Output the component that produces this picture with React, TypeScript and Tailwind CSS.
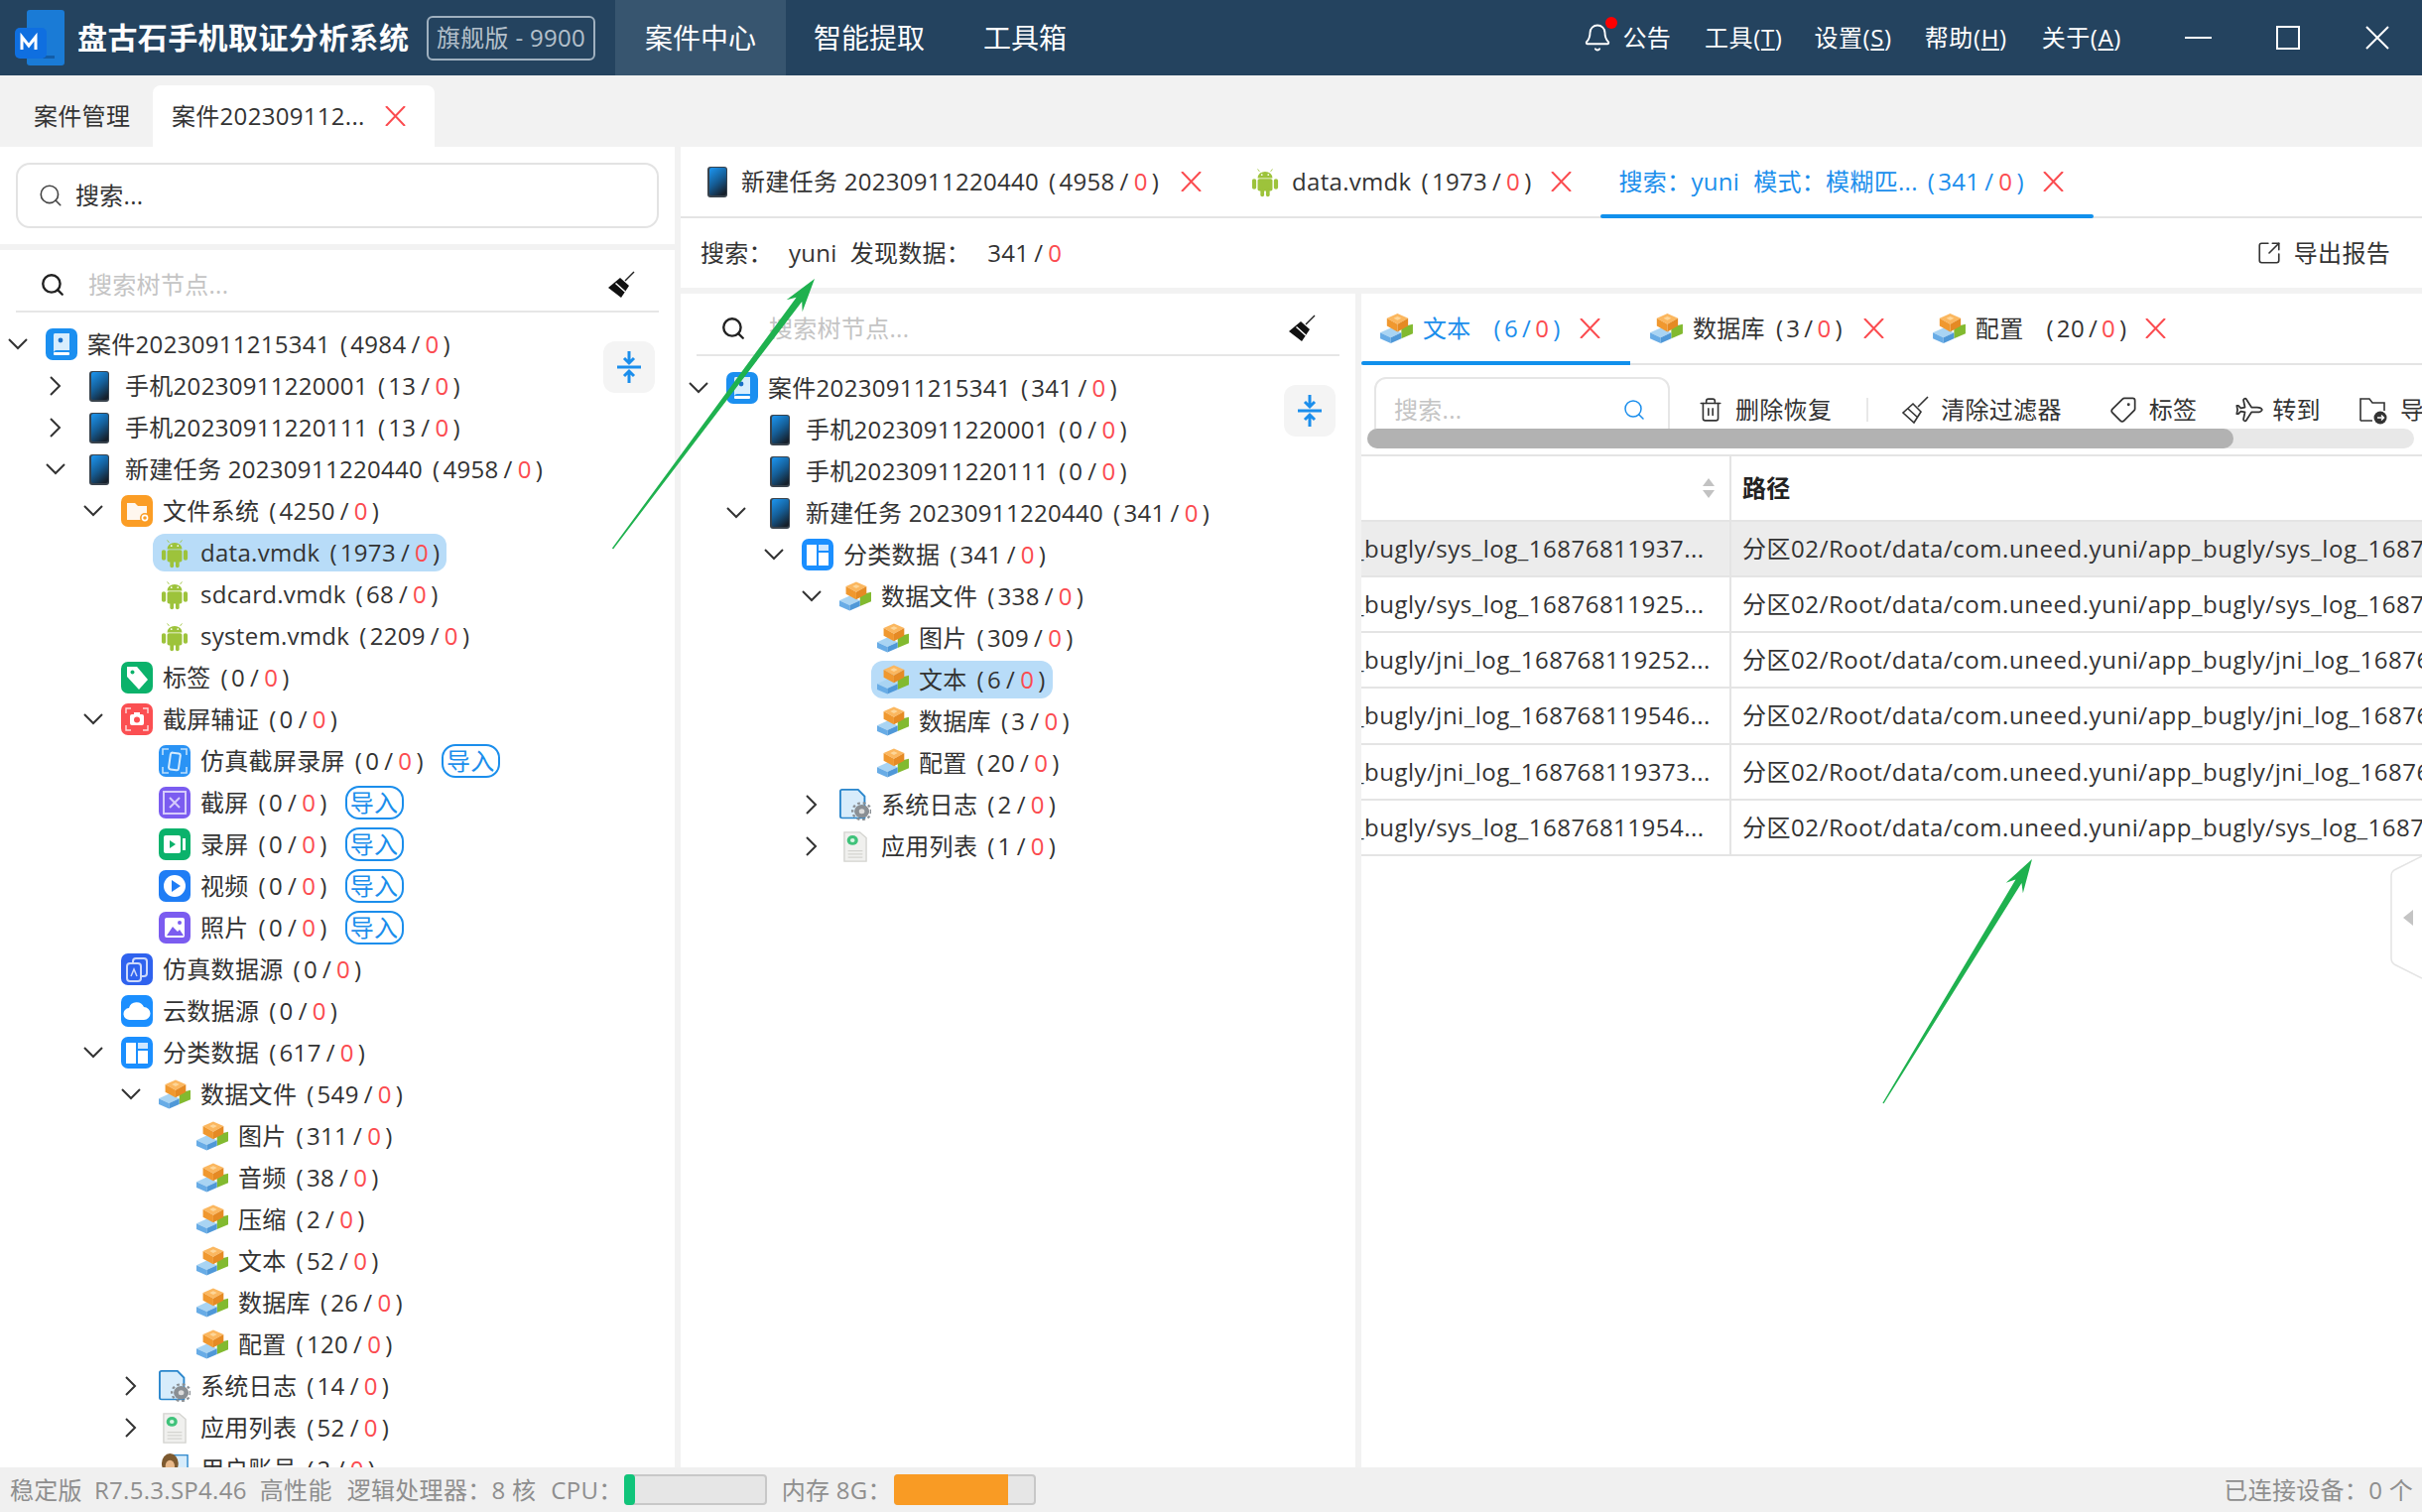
import { ReactNode } from "react";
import { Bell, Search, SquareArrowOutUpRight, Tag, Trash2, Plane } from "lucide-react";

type IconName =
  | "case" | "phone" | "folder" | "android" | "tag" | "camera" | "sim" | "shot" | "rec"
  | "video" | "photo" | "simdata" | "cloud" | "grid" | "blocks" | "log" | "app" | "user";

type Node = {
  level: number;
  icon: IconName;
  label: string;
  count: number;
  arrow?: "down" | "right";
  selected?: boolean;
  imported?: boolean;
};

const Tile = ({ color, children }: { color: string; children: ReactNode }) => (
  <svg width="32" height="32" viewBox="0 0 32 32">
    <rect width="32" height="32" rx="7" fill={color} />
    {children}
  </svg>
);

const Phone = () => (
  <svg width="20" height="31" viewBox="0 0 20 31">
    <defs>
      <linearGradient id="phoneFill" x1="0.2" y1="0" x2="0.7" y2="1">
        <stop offset="0" stopColor="#1b8fe6" />
        <stop offset="0.5" stopColor="#155d96" />
        <stop offset="1" stopColor="#16202c" />
      </linearGradient>
    </defs>
    <rect width="20" height="31" rx="3" fill="#39434d" />
    <rect x="2" y="1" width="17" height="28" rx="2" fill="url(#phoneFill)" />
  </svg>
);

const Android = () => (
  <svg width="28" height="31" viewBox="0 0 30 38" preserveAspectRatio="none" fill="#9dc33b">
    <path d="M7 14a8 8 0 0 1 16 0z" />
    <path d="M9 6 7 3M21 6l2-3" stroke="#9dc33b" strokeWidth="1" />
    <rect x="7" y="15" width="16" height="15" rx="2" />
    <rect x="1" y="15" width="4.5" height="13" rx="2.2" />
    <rect x="24.5" y="15" width="4.5" height="13" rx="2.2" />
    <rect x="10" y="27" width="4" height="10" rx="2" />
    <rect x="16" y="27" width="4" height="10" rx="2" />
    <circle cx="11.5" cy="10" r="1" fill="#fff" />
    <circle cx="18.5" cy="10" r="1" fill="#fff" />
  </svg>
);

const Blocks = () => (
  <svg width="33" height="30" viewBox="0 0 34 31">
    <path d="M22 14l12-3v10l-12 5z" fill="#82ba30" />
    <path d="M0 20l11-5 11 5-11 5z" fill="#a9d4f3" />
    <path d="M0 20l11 5v6L0 26z" fill="#68ace6" />
    <path d="M11 25l11-5v6l-11 5z" fill="#4f98d8" />
    <path d="M7 5 18 0l11 5-11 6z" fill="#fbb75f" />
    <path d="M7 5l11 6v8L7 13z" fill="#f0982f" />
    <path d="M18 11l11-6v8l-11 6z" fill="#e58a24" />
    <path d="M14 5l4-2 4 2-4 2z" fill="#fdd699" />
  </svg>
);

const TreeIcon = ({ name }: { name: IconName }) => {
  switch (name) {
    case "phone":
      return <Phone />;
    case "android":
      return <Android />;
    case "blocks":
      return <Blocks />;
    case "case":
      return (
        <Tile color="#1b8ff0">
          <path d="M9 5h15v17H11a3 3 0 0 0-3 3V7a2 2 0 0 1 1-2z" fill="#d8edfd" />
          <rect x="8" y="24" width="16" height="3" rx="1" fill="#fff" />
          <circle cx="15" cy="12" r="2.4" fill="#1b6fc8" />
        </Tile>
      );
    case "folder":
      return (
        <Tile color="#fb9d25">
          <path d="M6 8h8l3 3h9v14H6z" fill="#fff" opacity="0.92" />
          <circle cx="24" cy="23" r="5" fill="#fb9d25" />
          <circle cx="24" cy="23" r="2.6" fill="none" stroke="#fff" strokeWidth="1.6" />
        </Tile>
      );
    case "tag":
      return (
        <Tile color="#0bb26b">
          <path d="M6 5h10l11 13-9 10L6 15z" fill="#fff" />
          <circle cx="11.5" cy="10.5" r="2" fill="#0bb26b" />
        </Tile>
      );
    case "camera":
      return (
        <Tile color="#fb4f52">
          <path d="M5 10V5h5M22 5h5v5M27 22v5h-5M10 27H5v-5" fill="none" stroke="#fff" strokeWidth="1.4" opacity="0.8" />
          <rect x="9" y="11" width="14" height="11" rx="2" fill="#fff" />
          <rect x="13" y="9" width="6" height="3" fill="#fff" />
          <circle cx="16" cy="16.5" r="3" fill="#fb4f52" />
        </Tile>
      );
    case "sim":
      return (
        <Tile color="#2a93f5">
          <path d="M4 10V4h6M22 4h6v6M28 22v6h-6M10 28H4v-6" fill="none" stroke="#bfe0fc" strokeWidth="1.6" />
          <rect x="11" y="8" width="10" height="17" rx="2" fill="none" stroke="#d5ebfd" strokeWidth="2" transform="rotate(8 16 16)" />
        </Tile>
      );
    case "shot":
      return (
        <Tile color="#7b5cf0">
          <rect x="5" y="5" width="22" height="22" fill="none" stroke="#d6ccfb" strokeWidth="2" />
          <path d="M11 11l10 10M21 11 11 21" stroke="#d6ccfb" strokeWidth="2" />
        </Tile>
      );
    case "rec":
      return (
        <Tile color="#0bb26b">
          <rect x="5" y="7" width="17" height="18" rx="2" fill="#fff" />
          <rect x="24" y="10" width="3" height="12" fill="#fff" />
          <path d="M11 12l6 4-6 4z" fill="#0bb26b" />
        </Tile>
      );
    case "video":
      return (
        <Tile color="#1f7df5">
          <circle cx="16" cy="16" r="11" fill="#fff" />
          <path d="M13 10l9 6-9 6z" fill="#1f7df5" />
        </Tile>
      );
    case "photo":
      return (
        <Tile color="#7b5cf0">
          <rect x="6" y="6" width="20" height="20" rx="2" fill="#fff" />
          <path d="M8 24l6-9 5 5 2-2 4 6z" fill="#7b5cf0" />
          <circle cx="21" cy="11" r="2" fill="#7b5cf0" />
        </Tile>
      );
    case "simdata":
      return (
        <Tile color="#2f62ee">
          <rect x="12" y="5" width="14" height="18" rx="3" fill="none" stroke="#cdd9fb" strokeWidth="2" />
          <rect x="6" y="10" width="14" height="18" rx="3" fill="#2f62ee" stroke="#cdd9fb" strokeWidth="2" />
          <path d="M10 23l3-7 3 7" fill="none" stroke="#cdd9fb" strokeWidth="1.5" />
        </Tile>
      );
    case "cloud":
      return (
        <Tile color="#1b8fff">
          <path d="M9 25a6 6 0 0 1-1-12 8 8 0 0 1 15-1 6.5 6.5 0 0 1 0 13z" fill="#fff" />
        </Tile>
      );
    case "grid":
      return (
        <Tile color="#1b8fff">
          <rect x="5" y="6" width="10" height="21" fill="#fff" />
          <rect x="17" y="6" width="10" height="6" fill="#cfe7ff" />
          <rect x="17" y="14" width="10" height="13" fill="#fff" />
        </Tile>
      );
    case "log":
      return (
        <svg width="32" height="32" viewBox="0 0 34 38" preserveAspectRatio="none">
          <path d="M1 3a2 2 0 0 1 2-2h17l7 8v26H3a2 2 0 0 1-2-2z" fill="#d7ecfb" stroke="#2a86cc" strokeWidth="2" />
          <circle cx="24" cy="27" r="8" fill="#8a8f94" />
          <circle cx="24" cy="27" r="10" fill="none" stroke="#8a8f94" strokeWidth="2.5" strokeDasharray="3 3" />
          <circle cx="24" cy="27" r="3" fill="#dcdcdc" />
        </svg>
      );
    case "app":
      return (
        <svg width="24" height="31" viewBox="0 0 26 38" preserveAspectRatio="none">
          <path d="M1 1h17l7 7v29H1z" fill="#f0f0ee" stroke="#d4d4d0" strokeWidth="1.5" />
          <circle cx="10" cy="11" r="6" fill="#3fc27a" />
          <circle cx="10" cy="11" r="2.5" fill="#d7f5e3" />
          <path d="M5 24h16M5 28h16M5 32h16" stroke="#d4d4d0" strokeWidth="1.5" />
        </svg>
      );
    case "user":
      return (
        <svg width="28" height="32" viewBox="0 0 30 38" preserveAspectRatio="none">
          <rect x="14" y="2" width="15" height="30" fill="#d7ecfb" stroke="#2a86cc" strokeWidth="1.5" />
          <ellipse cx="10" cy="12" rx="9" ry="12" fill="#7d5a30" />
          <ellipse cx="10" cy="15" rx="5" ry="7" fill="#e9b98a" />
        </svg>
      );
  }
};

const Chevron = ({ dir }: { dir?: "down" | "right" }) => (
  <span className="flex h-[24px] w-[24px] shrink-0 items-center justify-center">
    {dir === "down" && (
      <svg width="20" height="12" viewBox="0 0 20 12" fill="none" stroke="#333" strokeWidth="2">
        <path d="M1 1l9 9 9-9" />
      </svg>
    )}
    {dir === "right" && (
      <svg width="12" height="20" viewBox="0 0 12 20" fill="none" stroke="#333" strokeWidth="2">
        <path d="M1 1l9 9-9 9" />
      </svg>
    )}
  </span>
);

const CloseX = () => (
  <svg width="21" height="20" viewBox="0 0 21 20" fill="none" stroke="#fb4b4f" strokeWidth="2" className="shrink-0">
    <path d="M1 0l19 20M20 0 1 20" />
  </svg>
);

const Count = ({ n }: { n: number }) => (
  <span className="ml-[10px] whitespace-nowrap">
    <span className="mr-[3px]">(</span>
    {n}
    <span className="mx-[5px]">/</span>
    <span className="text-[#fb4b4f]">0</span>
    <span className="ml-[4px]">)</span>
  </span>
);

const TabCount = ({ n }: { n: number }) => (
  <span className="whitespace-nowrap">
    <span className="mr-[3px]">(</span>
    {n}
    <span className="mx-[4px]">/</span>
    <span className="text-[#fb4b4f]">0</span>
    <span className="ml-[4px]">)</span>
  </span>
);

const Broom = () => (
  <svg width="28" height="28" viewBox="0 0 28 28" className="shrink-0">
    <path d="M27 1 18 10" stroke="#222" strokeWidth="1.5" />
    <path d="M13 7l9 8-8 12L1 17z" fill="#111" />
    <path d="M8.5 12.5 18 21" stroke="#fff" strokeWidth="1.5" />
  </svg>
);

const Collapse = () => (
  <svg width="26" height="34" viewBox="0 0 26 34" fill="none" stroke="#1b8eec" strokeWidth="3">
    <path d="M13 1v11M8 8l5 5 5-5" />
    <path d="M1 17h24" />
    <path d="M13 33V22M8 26l5-5 5 5" />
  </svg>
);

const TreeSearch = () => (
  <div className="mx-[16px] flex h-[63px] items-center border-b-2 border-[#e6e6e6] pl-[24px] pr-[24px] pt-[8px]">
    <Search size={26} strokeWidth={2.2} className="shrink-0 text-[#222]" />
    <span className="ml-[23px] flex-1 text-[#c4c4c4]">搜索树节点...</span>
    <Broom />
  </div>
);

const Tree = ({ nodes }: { nodes: Node[] }) => {
  const indent = ["pl-[6px]", "pl-[44px]", "pl-[82px]", "pl-[120px]", "pl-[158px]"];
  return (
    <div className="pt-[11px]">
      {nodes.map((node) => (
        <div key={node.label + node.count + node.level} className={`flex h-[42px] items-center ${indent[node.level]}`}>
          <Chevron dir={node.arrow} />
          <div
            className={
              node.selected
                ? "ml-[10px] flex h-[38px] items-center rounded-[12px] bg-[#b8dcf8] pl-[6px] pr-[7px]"
                : "ml-[16px] flex h-[38px] items-center"
            }
          >
            <span className="flex w-[32px] shrink-0 items-center justify-center">
              <TreeIcon name={node.icon} />
            </span>
            <span className="ml-[10px] flex items-center whitespace-nowrap">
              {node.label}
              <Count n={node.count} />
            </span>
          </div>
          {node.imported && (
            <span className="ml-[18px] flex h-[34px] w-[59px] items-center justify-center rounded-[14px] border-2 border-[#1b8eec] text-[#1b8eec]">
              导入
            </span>
          )}
        </div>
      ))}
    </div>
  );
};

const Arrow = ({ x1, y1, x2, y2 }: { x1: number; y1: number; x2: number; y2: number }) => {
  const len = Math.hypot(x2 - x1, y2 - y1);
  const ux = (x2 - x1) / len;
  const uy = (y2 - y1) / len;
  const nx = -uy;
  const ny = ux;
  const at = (back: number, side: number) => `${x2 - ux * back + nx * side},${y2 - uy * back + ny * side}`;
  return (
    <polygon
      fill="#1fb14f"
      points={[at(len, -0.7), at(26, -3.5), at(34, -10), at(0, 0), at(34, 10), at(26, 3.5), at(len, 0.7)].join(" ")}
    />
  );
};

const leftNodes: Node[] = [
  { level: 0, icon: "case", label: "案件20230911215341", count: 4984, arrow: "down" },
  { level: 1, icon: "phone", label: "手机20230911220001", count: 13, arrow: "right" },
  { level: 1, icon: "phone", label: "手机20230911220111", count: 13, arrow: "right" },
  { level: 1, icon: "phone", label: "新建任务 20230911220440", count: 4958, arrow: "down" },
  { level: 2, icon: "folder", label: "文件系统", count: 4250, arrow: "down" },
  { level: 3, icon: "android", label: "data.vmdk", count: 1973, selected: true },
  { level: 3, icon: "android", label: "sdcard.vmdk", count: 68 },
  { level: 3, icon: "android", label: "system.vmdk", count: 2209 },
  { level: 2, icon: "tag", label: "标签", count: 0 },
  { level: 2, icon: "camera", label: "截屏辅证", count: 0, arrow: "down" },
  { level: 3, icon: "sim", label: "仿真截屏录屏", count: 0, imported: true },
  { level: 3, icon: "shot", label: "截屏", count: 0, imported: true },
  { level: 3, icon: "rec", label: "录屏", count: 0, imported: true },
  { level: 3, icon: "video", label: "视频", count: 0, imported: true },
  { level: 3, icon: "photo", label: "照片", count: 0, imported: true },
  { level: 2, icon: "simdata", label: "仿真数据源", count: 0 },
  { level: 2, icon: "cloud", label: "云数据源", count: 0 },
  { level: 2, icon: "grid", label: "分类数据", count: 617, arrow: "down" },
  { level: 3, icon: "blocks", label: "数据文件", count: 549, arrow: "down" },
  { level: 4, icon: "blocks", label: "图片", count: 311 },
  { level: 4, icon: "blocks", label: "音频", count: 38 },
  { level: 4, icon: "blocks", label: "压缩", count: 2 },
  { level: 4, icon: "blocks", label: "文本", count: 52 },
  { level: 4, icon: "blocks", label: "数据库", count: 26 },
  { level: 4, icon: "blocks", label: "配置", count: 120 },
  { level: 3, icon: "log", label: "系统日志", count: 14, arrow: "right" },
  { level: 3, icon: "app", label: "应用列表", count: 52, arrow: "right" },
  { level: 3, icon: "user", label: "用户账号", count: 2 },
];

const midNodes: Node[] = [
  { level: 0, icon: "case", label: "案件20230911215341", count: 341, arrow: "down" },
  { level: 1, icon: "phone", label: "手机20230911220001", count: 0 },
  { level: 1, icon: "phone", label: "手机20230911220111", count: 0 },
  { level: 1, icon: "phone", label: "新建任务 20230911220440", count: 341, arrow: "down" },
  { level: 2, icon: "grid", label: "分类数据", count: 341, arrow: "down" },
  { level: 3, icon: "blocks", label: "数据文件", count: 338, arrow: "down" },
  { level: 4, icon: "blocks", label: "图片", count: 309 },
  { level: 4, icon: "blocks", label: "文本", count: 6, selected: true },
  { level: 4, icon: "blocks", label: "数据库", count: 3 },
  { level: 4, icon: "blocks", label: "配置", count: 20 },
  { level: 3, icon: "log", label: "系统日志", count: 2, arrow: "right" },
  { level: 3, icon: "app", label: "应用列表", count: 1, arrow: "right" },
];

const rows = [
  ["_bugly/sys_log_16876811937...", "分区02/Root/data/com.uneed.yuni/app_bugly/sys_log_16876811937"],
  ["_bugly/sys_log_16876811925...", "分区02/Root/data/com.uneed.yuni/app_bugly/sys_log_16876811925"],
  ["_bugly/jni_log_168768119252...", "分区02/Root/data/com.uneed.yuni/app_bugly/jni_log_168768119252"],
  ["_bugly/jni_log_168768119546...", "分区02/Root/data/com.uneed.yuni/app_bugly/jni_log_168768119546"],
  ["_bugly/jni_log_168768119373...", "分区02/Root/data/com.uneed.yuni/app_bugly/jni_log_168768119373"],
  ["_bugly/sys_log_16876811954...", "分区02/Root/data/com.uneed.yuni/app_bugly/sys_log_16876811954"],
];

export default function App() {
  return (
    <div className="relative flex h-[1524px] w-[2441px] flex-col overflow-hidden bg-[#f2f2f2] font-['Open_Sans','Noto_Sans_CJK_SC',sans-serif] text-[24px] leading-none tracking-[0.3px] text-[#333]">
      {/* title bar */}
      <header className="flex h-[76px] shrink-0 items-center bg-[#24435f] text-white">
        <svg width="50" height="56" viewBox="0 0 50 56" className="ml-[15px] shrink-0">
          <rect x="12" y="0" width="38" height="56" rx="3" fill="#1a7bd6" />
          <rect x="28" y="46" width="12" height="3" fill="#125da8" />
          <rect x="0" y="18" width="32" height="31" rx="5" fill="#0f6fe0" />
          <path d="M7 40V27l7 9 7-9v13" fill="none" stroke="#fff" strokeWidth="3" />
        </svg>
        <div className="ml-[13px] w-[334px] whitespace-nowrap text-[30px] font-bold tracking-[0.4px]">盘古石手机取证分析系统</div>
        <div className="ml-[18px] flex h-[45px] w-[170px] items-center justify-center rounded-[6px] border-2 border-[#9fb0bf] text-[#b4c0cb]">
          旗舰版 - 9900
        </div>
        <div className="ml-[20px] flex h-full w-[172px] items-center justify-center bg-[#37556f] text-[28px] tracking-normal">案件中心</div>
        <div className="ml-[28px] text-[28px] tracking-normal">智能提取</div>
        <div className="ml-[59px] text-[28px] tracking-normal">工具箱</div>
        <div className="ml-auto flex items-center pr-[33px]">
          <div className="relative">
            <Bell size={30} strokeWidth={1.5} />
            <span className="absolute right-[-5px] top-[-6px] h-[12px] w-[12px] rounded-full bg-[#f00]" />
          </div>
          <span className="ml-[10px]">公告</span>
          <span className="ml-[34px] tracking-[0.6px]">工具(<u>T</u>)</span>
          <span className="ml-[32px] tracking-[0.6px]">设置(<u>S</u>)</span>
          <span className="ml-[33px] tracking-[0.6px]">帮助(<u>H</u>)</span>
          <span className="ml-[35px] tracking-[0.6px]">关于(<u>A</u>)</span>
          <span className="ml-[64px] h-[2px] w-[27px] bg-white" />
          <span className="ml-[65px] h-[24px] w-[24px] border-2 border-white" />
          <svg width="24" height="24" viewBox="0 0 24 24" fill="none" stroke="#fff" strokeWidth="2" className="ml-[66px]">
            <path d="M1 1l22 22M23 1 1 23" />
          </svg>
        </div>
      </header>

      {/* case tabs */}
      <div className="flex h-[72px] shrink-0 items-end">
        <div className="flex h-[62px] w-[154px] items-center pl-[34px]">案件管理</div>
        <div className="flex h-[62px] w-[284px] items-center rounded-t-[8px] bg-white pl-[19px]">
          <span>案件202309112...</span>
          <span className="ml-[20px]">
            <CloseX />
          </span>
        </div>
      </div>

      <div className="flex min-h-0 flex-1">
        {/* left column */}
        <aside className="flex w-[680px] shrink-0 flex-col">
          <div className="flex h-[98px] shrink-0 items-center bg-white px-[16px]">
            <div className="flex h-[66px] w-full items-center rounded-[14px] border-2 border-[#e3e3e3] pl-[20px]">
              <Search size={26} strokeWidth={1.5} className="text-[#444]" />
              <span className="ml-[12px]">搜索...</span>
            </div>
          </div>
          <div className="relative mt-[6px] min-h-0 flex-1 overflow-hidden bg-white">
            <TreeSearch />
            <Tree nodes={leftNodes} />
            <div className="absolute left-[608px] top-[92px] flex h-[52px] w-[52px] items-center justify-center rounded-[12px] bg-[#f4f4f4]">
              <Collapse />
            </div>
          </div>
        </aside>

        <main className="ml-[6px] flex min-w-0 flex-1 flex-col">
          {/* task tabs */}
          <div className="flex h-[72px] shrink-0 items-center border-b-2 border-[#e4e4e4] bg-white">
            <span className="ml-[27px] flex w-[20px]">
              <Phone />
            </span>
            <span className="ml-[14px] flex whitespace-nowrap">
              新建任务 20230911220440
              <Count n={4958} />
            </span>
            <span className="ml-[22px]">
              <CloseX />
            </span>
            <span className="ml-[50px] flex">
              <Android />
            </span>
            <span className="ml-[13px] flex whitespace-nowrap">
              data.vmdk
              <Count n={1973} />
            </span>
            <span className="ml-[19px]">
              <CloseX />
            </span>
            <div className="relative ml-[29px] flex h-full items-center pl-[19px] pr-[30px] text-[#1b8eec]">
              <span className="flex whitespace-nowrap">
                <span>搜索：yuni</span>
                <span className="ml-[14px]">模式：模糊匹...</span>
                <Count n={341} />
              </span>
              <span className="ml-[19px]">
                <CloseX />
              </span>
              <span className="absolute bottom-[-2px] left-0 right-0 h-[4px] rounded-full bg-[#1190ec]" />
            </div>
          </div>

          {/* search summary */}
          <div className="flex h-[70px] shrink-0 items-center bg-white pl-[20px] pr-[32px]">
            <span>搜索：</span>
            <span className="ml-[16px]">yuni</span>
            <span className="ml-[13px]">发现数据：</span>
            <span className="ml-[17px]">
              341<span className="mx-[5px]">/</span>
              <span className="text-[#fb4b4f]">0</span>
            </span>
            <span className="ml-auto flex items-center">
              <SquareArrowOutUpRight size={26} strokeWidth={1.5} />
              <span className="ml-[12px]">导出报告</span>
            </span>
          </div>

          <div className="mt-[6px] flex min-h-0 flex-1">
            {/* result tree */}
            <section className="relative w-[680px] shrink-0 overflow-hidden bg-white">
              <TreeSearch />
              <Tree nodes={midNodes} />
              <div className="absolute left-[608px] top-[92px] flex h-[52px] w-[52px] items-center justify-center rounded-[12px] bg-[#f4f4f4]">
                <Collapse />
              </div>
            </section>

            {/* result table */}
            <section className="relative ml-[6px] flex min-w-0 flex-1 flex-col overflow-hidden bg-white">
              <div className="flex h-[72px] shrink-0 items-center border-b-2 border-[#e4e4e4]">
                <div className="relative flex h-full w-[271px] items-center pl-[19px] text-[#1b8eec]">
                  <Blocks />
                  <span className="ml-[10px]">文本</span>
                  <span className="ml-[23px]">
                    <TabCount n={6} />
                  </span>
                  <span className="ml-[19px]">
                    <CloseX />
                  </span>
                  <span className="absolute bottom-[-2px] left-0 right-0 h-[4px] rounded-l-full bg-[#1190ec]" />
                </div>
                <span className="ml-[20px] flex">
                  <Blocks />
                </span>
                <span className="ml-[10px]">数据库</span>
                <span className="ml-[11px]">
                  <TabCount n={3} />
                </span>
                <span className="ml-[21px]">
                  <CloseX />
                </span>
                <span className="ml-[49px] flex">
                  <Blocks />
                </span>
                <span className="ml-[10px]">配置</span>
                <span className="ml-[23px]">
                  <TabCount n={20} />
                </span>
                <span className="ml-[19px]">
                  <CloseX />
                </span>
              </div>

              <div className="relative flex h-[92px] shrink-0 items-start overflow-hidden border-b-2 border-[#e4e4e4] pt-[12px]">
                <div className="ml-[13px] flex h-[65px] w-[298px] shrink-0 items-center rounded-[12px] border-2 border-[#e6e6e6] pl-[18px] pr-[22px]">
                  <span className="flex-1 text-[#c4c4c4]">搜索...</span>
                  <Search size={24} strokeWidth={1.5} className="text-[#1b8eec]" />
                </div>
                <div className="flex h-[65px] shrink-0 items-center whitespace-nowrap">
                  <Trash2 size={26} strokeWidth={1.5} className="ml-[28px] shrink-0" />
                  <span className="ml-[12px]">删除恢复</span>
                  <span className="ml-[35px] h-[24px] w-[2px] bg-[#e8e8e8]" />
                  <svg width="30" height="30" viewBox="0 0 30 30" fill="none" stroke="#333" strokeWidth="1.6" className="ml-[32px] shrink-0">
                    <path d="M28 2 18 12M13 9l8 8-7 11L3 18z M8 14l10 9" />
                  </svg>
                  <span className="ml-[11px]">清除过滤器</span>
                  <Tag size={28} strokeWidth={1.5} className="ml-[48px] shrink-0 rotate-90" />
                  <span className="ml-[12px]">标签</span>
                  <Plane size={28} strokeWidth={1.5} className="ml-[37px] shrink-0 rotate-[45deg]" />
                  <span className="ml-[11px]">转到</span>
                  <svg width="30" height="30" viewBox="0 0 30 30" className="ml-[38px] shrink-0">
                    <path d="M2 26V4h9l3 4h12v8M2 26h12" fill="none" stroke="#333" strokeWidth="1.6" />
                    <circle cx="22" cy="23" r="6.5" fill="#333" />
                    <path d="M19 23h6M23 20.5l2.5 2.5-2.5 2.5" fill="none" stroke="#fff" strokeWidth="1.4" />
                  </svg>
                  <span className="ml-[12px]">导出</span>
                </div>
                <div className="absolute left-[6px] right-[8px] top-[64px] h-[20px] rounded-full bg-[#e8e8e8]">
                  <div className="h-full w-[873px] rounded-full bg-[#afafaf]/95" />
                </div>
              </div>

              <div className="flex h-[66px] shrink-0 border-b-2 border-[#e4e4e4]">
                <div className="flex w-[371px] shrink-0 items-center justify-end pr-[14px]">
                  <svg width="14" height="20" viewBox="0 0 14 20" fill="#c2c2c2">
                    <path d="M7 0l6 8H1zM7 20l6-8H1z" />
                  </svg>
                </div>
                <div className="flex flex-1 items-center border-l-2 border-[#e4e4e4] pl-[11px] font-bold text-[#222]">路径</div>
              </div>

              {rows.map(([name, path], i) => (
                <div
                  key={name}
                  className={
                    i === 0
                      ? "flex h-[56px] shrink-0 border-b-2 border-[#e4e4e4] bg-[#ececec]"
                      : "flex h-[56.2px] shrink-0 border-b-2 border-[#e4e4e4]"
                  }
                >
                  <div className="flex w-[371px] shrink-0 items-center overflow-hidden whitespace-nowrap tracking-[0.5px]">
                    <span className="-ml-[8px]">{name}</span>
                  </div>
                  <div className="flex min-w-0 flex-1 items-center overflow-hidden whitespace-nowrap border-l-2 border-[#e4e4e4] pl-[11px] tracking-[0.55px]">
                    {path}
                  </div>
                </div>
              ))}

              <svg width="33" height="125" viewBox="0 0 33 125" className="absolute right-0 top-[566px]">
                <path d="M33 1 5 15q-3 2-3 6v83q0 4 3 6l28 14" fill="#fff" stroke="#e4e4e4" strokeWidth="1.5" />
                <path d="M24 55v16l-10-8z" fill="#c4c4c4" />
              </svg>
            </section>
          </div>
        </main>
      </div>

      {/* status bar */}
      <footer className="relative flex h-[45px] shrink-0 items-center bg-[#f0f0f0] pl-[10px] pr-[9px] text-[#8e8e8e]">
        <span>稳定版</span>
        <span className="ml-[12px]">R7.5.3.SP4.46</span>
        <span className="ml-[13px]">高性能</span>
        <span className="ml-[15px]">逻辑处理器：8 核</span>
        <span className="ml-[15px]">CPU：</span>
        <div className="ml-[1px] h-[31px] w-[144px] rounded-[4px] border-2 border-[#c8c8c8] bg-[#e6e6e6]">
          <div className="-ml-[2px] -mt-[2px] h-[31px] w-[11px] rounded-[4px] bg-[#10c47a]" />
        </div>
        <span className="ml-[15px]">内存 8G：</span>
        <div className="ml-[2px] h-[31px] w-[143px] rounded-[4px] border-2 border-[#c8c8c8] bg-[#e6e6e6]">
          <div className="-ml-[2px] -mt-[2px] h-[31px] w-[115px] rounded-l-[4px] bg-[#f99b24]" />
        </div>
        <span className="ml-auto">已连接设备：0 个</span>
      </footer>

      {/* green annotation arrows */}
      <svg width="2441" height="1524" viewBox="0 0 2441 1524" className="pointer-events-none absolute left-0 top-0">
        <Arrow x1={617.5} y1={553} x2={821} y2={281} />
        <Arrow x1={1898} y1={1112} x2={2048} y2={866} />
      </svg>
    </div>
  );
}
